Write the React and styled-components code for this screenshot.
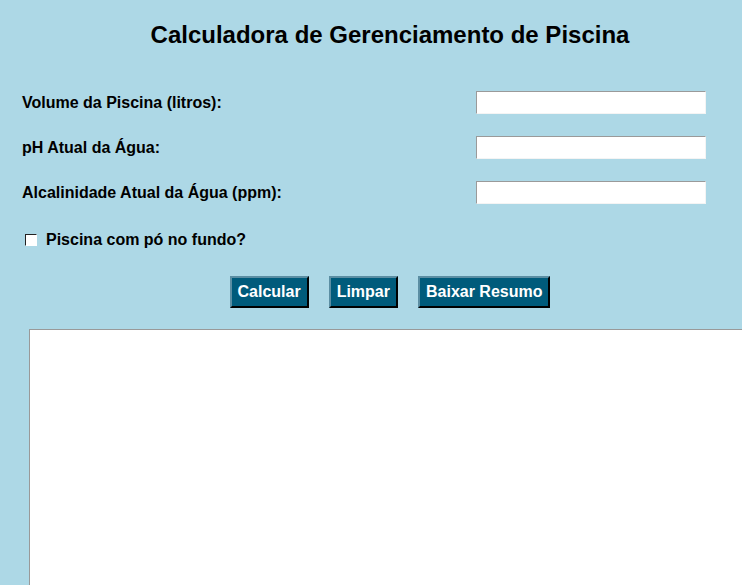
import React, { useState } from 'react'
import styled, { createGlobalStyle } from 'styled-components'

const GlobalStyle = createGlobalStyle`
  html, body {
    margin: 0;
    padding: 0;
    background: #add8e6;
    font-family: "Liberation Sans", Arial, sans-serif;
    overflow: hidden;
  }
`

const Page = styled.div`
  width: 736px;
  padding: 0 0 0 22px;
`

const Title = styled.h1`
  margin: 0;
  padding-top: 21px;
  height: 49px;
  line-height: 28px;
  text-align: center;
  font-size: 24px;
  font-weight: bold;
  color: #000;
`

const Form = styled.div`
  display: flex;
  flex-direction: column;
  gap: 22px;
  width: 684px;
  padding-top: 21px;
`

const Row = styled.div`
  display: flex;
  align-items: center;
  justify-content: space-between;
`

const Label = styled.label`
  font-size: 16px;
  font-weight: bold;
  color: #000;
`

const Input = styled.input`
  box-sizing: border-box;
  width: 230px;
  height: 23px;
  margin: 0;
  border: 1px solid;
  border-color: #9a9a9a #f4f4f4 #f4f4f4 #9a9a9a;
  background: #fff;
  outline: none;
  font-family: inherit;
`

const CheckRow = styled.label`
  display: flex;
  align-items: center;
  gap: 9px;
  height: 23px;
  margin-top: 2px;
  padding-left: 3px;
  font-size: 16px;
  font-weight: bold;
  color: #000;
`

const Box = styled.input`
  appearance: none;
  box-sizing: border-box;
  width: 12px;
  height: 12px;
  margin: 0;
  border: 1px solid;
  border-color: #222 #fff #fff #222;
  background: #fff;
`

const Buttons = styled.div`
  display: flex;
  justify-content: center;
  gap: 20px;
  width: 736px;
  padding-top: 25px;
`

const Button = styled.button`
  height: 32px;
  padding: 0 6px;
  background: #005b7b;
  color: #fff;
  font-family: inherit;
  font-size: 16px;
  font-weight: bold;
  border: 2px solid;
  border-color: #5b8ea3 #000 #000 #5b8ea3;
  cursor: pointer;
`

const Output = styled.div`
  margin: 21px 0 0 7px;
  width: 760px;
  height: 300px;
  background: #fff;
  border-top: 1px solid #999;
  border-left: 1px solid #999;
`

const fields = [
  'Volume da Piscina (litros):',
  'pH Atual da Água:',
  'Alcalinidade Atual da Água (ppm):',
]

export default function App() {
  const [dust, setDust] = useState(false)
  return (
    <>
      <GlobalStyle />
      <Page>
        <Title>Calculadora de Gerenciamento de Piscina</Title>
        <Form>
          {fields.map(f => (
            <Row key={f}>
              <Label>{f}</Label>
              <Input type="text" />
            </Row>
          ))}
          <CheckRow>
            <Box type="checkbox" checked={dust} onChange={e => setDust(e.target.checked)} />
            Piscina com pó no fundo?
          </CheckRow>
        </Form>
        <Buttons>
          <Button>Calcular</Button>
          <Button>Limpar</Button>
          <Button>Baixar Resumo</Button>
        </Buttons>
        <Output />
      </Page>
    </>
  )
}
